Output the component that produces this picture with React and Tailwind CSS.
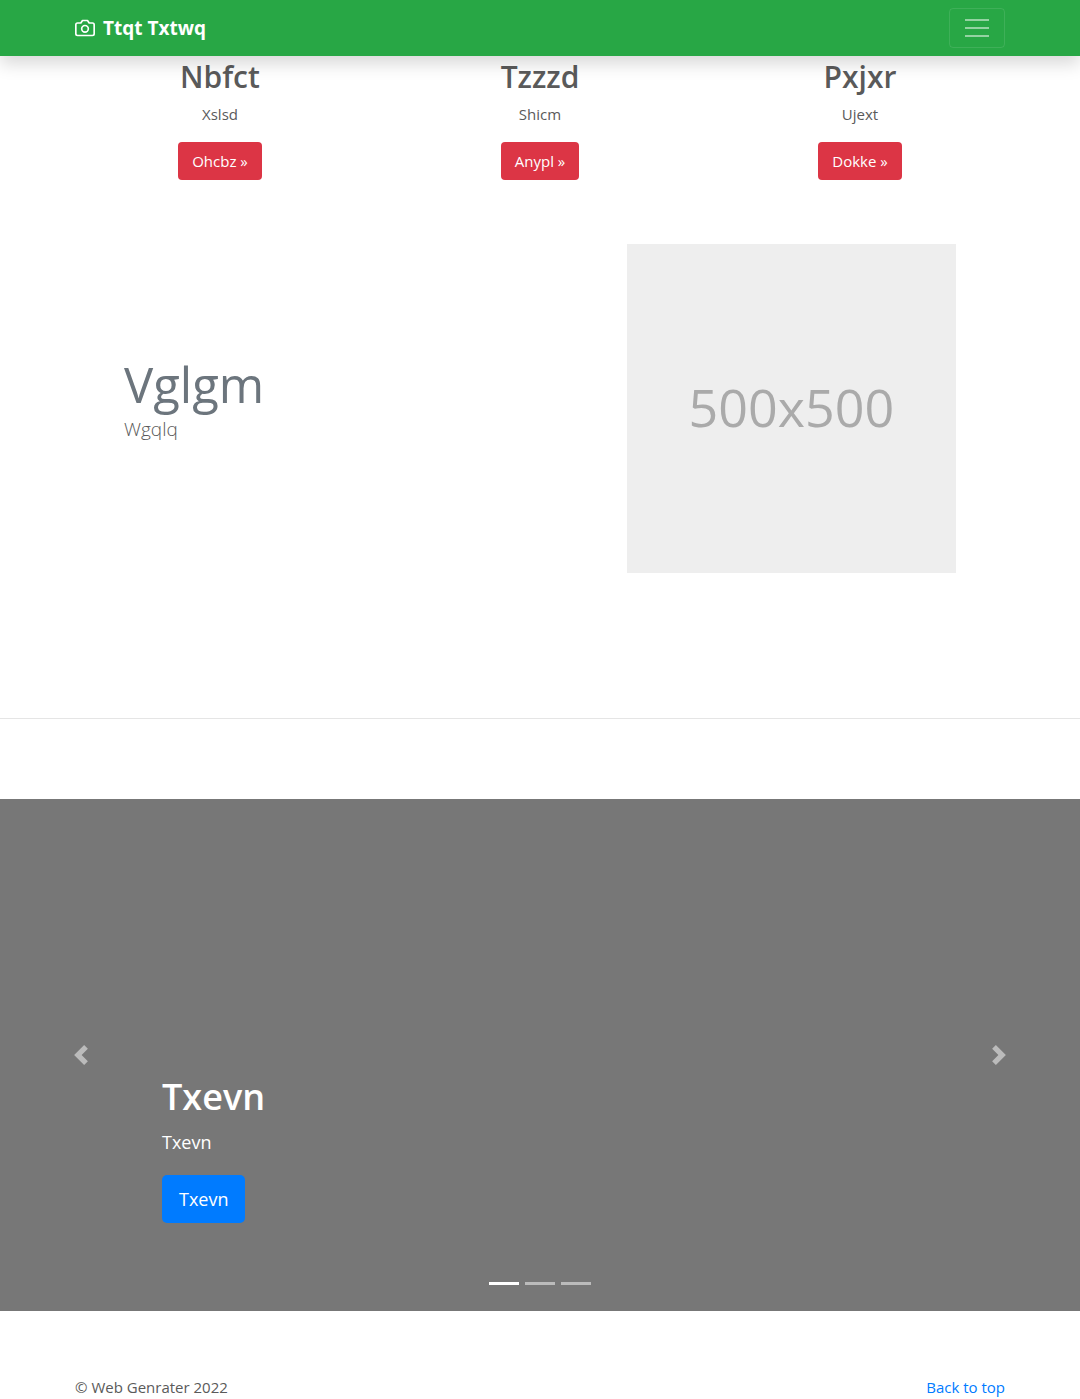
const features = [
  { title: "Nbfct", text: "Xslsd", action: "Ohcbz »" },
  { title: "Tzzzd", text: "Shicm", action: "Anypl »" },
  { title: "Pxjxr", text: "Ujext", action: "Dokke »" },
];

function CameraIcon() {
  return (
    <svg
      className="h-5 w-5"
      viewBox="0 0 24 24"
      fill="none"
      stroke="currentColor"
      strokeWidth="2"
      strokeLinecap="round"
      strokeLinejoin="round"
      aria-hidden="true"
    >
      <path d="M23 19a2 2 0 0 1-2 2H3a2 2 0 0 1-2-2V8a2 2 0 0 1 2-2h4l2-3h6l2 3h4a2 2 0 0 1 2 2z" />
      <circle cx="12" cy="13" r="4" />
    </svg>
  );
}

function Header() {
  return (
    <header className="relative z-10 bg-[#28a745] shadow-[0_8px_16px_rgba(0,0,0,0.15)]">
      <div className="mx-auto flex h-14 max-w-[960px] items-center justify-between px-[15px]">
        <a href="#" className="flex items-center gap-2 text-[19px] font-bold text-white">
          <CameraIcon />
          Ttqt Txtwq
        </a>
        <button
          type="button"
          aria-label="Toggle navigation"
          className="flex h-10 w-14 items-center justify-center rounded border border-white/10 text-white/50"
        >
          <svg className="h-[30px] w-[30px]" viewBox="0 0 30 30" stroke="currentColor" strokeWidth="2" aria-hidden="true">
            <path d="M3 7h24M3 15h24M3 23h24" />
          </svg>
        </button>
      </div>
    </header>
  );
}

function Carousel() {
  return (
    <section className="relative flex h-[512px] flex-col items-start justify-end bg-[#777] px-[15%] pb-[88px] text-white">
      <h1 className="mb-2 text-[36px] leading-[48px] font-semibold">Txevn</h1>
      <p className="mb-5 text-[18px] leading-[26px]">Txevn</p>
      <a href="#" className="rounded-[5px] bg-[#007bff] px-[17px] py-2 text-[18px] leading-8">
        Txevn
      </a>
      <button
        type="button"
        aria-label="Previous"
        className="absolute inset-y-0 left-0 flex w-[15%] items-center justify-center text-white/50"
      >
        <svg className="h-5 w-5" viewBox="0 0 8 8" fill="currentColor" aria-hidden="true">
          <path d="M5.25 0l-4 4 4 4 1.5-1.5L4.25 4l2.5-2.5L5.25 0z" />
        </svg>
      </button>
      <button
        type="button"
        aria-label="Next"
        className="absolute inset-y-0 right-0 flex w-[15%] items-center justify-center text-white/50"
      >
        <svg className="h-5 w-5" viewBox="0 0 8 8" fill="currentColor" aria-hidden="true">
          <path d="M2.75 0l-1.5 1.5L3.75 4l-2.5 2.5L2.75 8l4-4-4-4z" />
        </svg>
      </button>
      <div className="absolute inset-x-0 bottom-[26px] flex justify-center gap-[6px]">
        <button type="button" aria-label="Slide 1" className="h-[3px] w-[30px] bg-white" />
        <button type="button" aria-label="Slide 2" className="h-[3px] w-[30px] bg-white/50" />
        <button type="button" aria-label="Slide 3" className="h-[3px] w-[30px] bg-white/50" />
      </div>
    </section>
  );
}

export default function App() {
  return (
    <div className="bg-white font-['Open_Sans','Noto_Sans',sans-serif] text-[15px] leading-6 text-[#5a5a5a]">
      <Header />
      <main>
        <section className="mx-auto grid max-w-[960px] grid-cols-3 text-center">
          {features.map((f) => (
            <div key={f.title} className="flex flex-col items-center px-[15px]">
              <h2 className="mb-1 text-[30px] leading-[42px] font-semibold">{f.title}</h2>
              <p className="mb-4">{f.text}</p>
              <a href="#" className="rounded bg-[#dc3545] px-3.5 py-[7px] text-white">
                {f.action}
              </a>
            </div>
          ))}
        </section>

        <section className="mx-auto grid max-w-[832px] grid-cols-12 items-center gap-x-[30px] pt-16 pb-[65px]">
          <div className="col-span-7 pb-5">
            <h2 className="text-[49px] leading-[60px] text-[#6c757d]">Vglgm</h2>
            <p className="text-[19px] leading-[30px] font-light">Wgqlq</p>
          </div>
          <div
            role="img"
            aria-label="500x500"
            className="col-span-5 flex aspect-square items-center justify-center bg-[#eee] pb-1 text-[52px] text-[#aaa]"
          >
            500x500
          </div>
        </section>

        <hr className="my-20 border-black/10" />
        <Carousel />
      </main>
      <footer className="mx-auto flex max-w-[960px] justify-between px-[15px] pt-16">
        <p>© Web Genrater 2022</p>
        <a href="#" className="text-[#007bff]">
          Back to top
        </a>
      </footer>
    </div>
  );
}
